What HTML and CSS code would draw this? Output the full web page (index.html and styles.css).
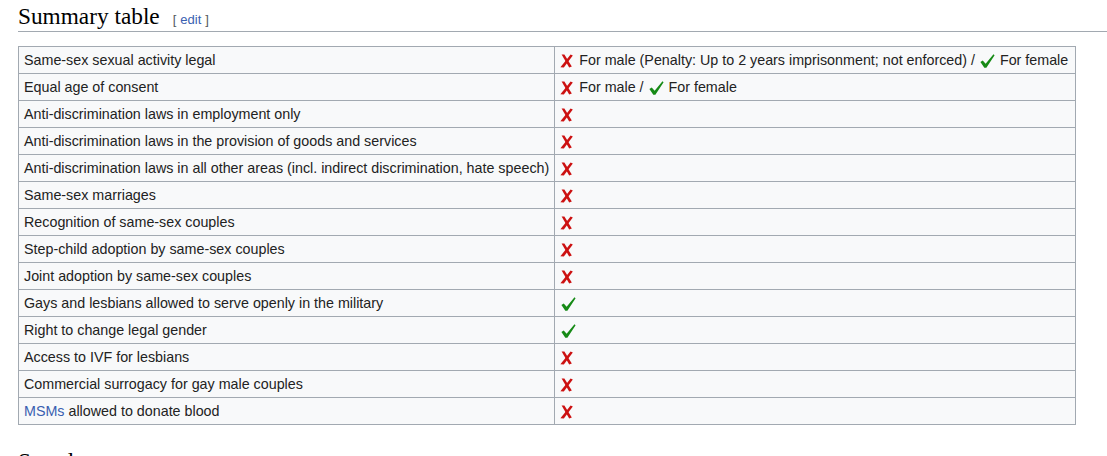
FILE: index.html
```html
<!DOCTYPE html>
<html>
<head>
<meta charset="utf-8">
<link rel="stylesheet" href="styles.css">
</head>
<body>
<div class="content">
  <h2 class="section-heading"><span class="headline">Summary table</span><span class="editsection"><span class="bracket">[</span><a class="edit-link">edit</a><span class="bracket">]</span></span></h2>
  <table class="wikitable">
    <tr><td class="label">Same-sex sexual activity legal</td><td class="value"><svg class="no" viewBox="0 0 13 14"><polygon points="1.6,0.6 4.4,0.4 11.8,12.6 9.2,13.6"/><polygon points="10.6,0.4 12.8,1.4 3.8,13.6 0.4,13.2"/></svg> For male (Penalty: Up to 2 years imprisonment; not enforced) / <svg class="yes" viewBox="0 0 16 15"><polygon points="0.4,8.6 2.9,7 6,10.4 14.4,0.4 15.6,1.4 6.8,14.6 4.6,14.6"/></svg> For female</td></tr>
    <tr><td class="label">Equal age of consent</td><td class="value"><svg class="no" viewBox="0 0 13 14"><polygon points="1.6,0.6 4.4,0.4 11.8,12.6 9.2,13.6"/><polygon points="10.6,0.4 12.8,1.4 3.8,13.6 0.4,13.2"/></svg> For male / <svg class="yes" viewBox="0 0 16 15"><polygon points="0.4,8.6 2.9,7 6,10.4 14.4,0.4 15.6,1.4 6.8,14.6 4.6,14.6"/></svg> For female</td></tr>
    <tr><td class="label">Anti-discrimination laws in employment only</td><td class="value"><svg class="no" viewBox="0 0 13 14"><polygon points="1.6,0.6 4.4,0.4 11.8,12.6 9.2,13.6"/><polygon points="10.6,0.4 12.8,1.4 3.8,13.6 0.4,13.2"/></svg></td></tr>
    <tr><td class="label">Anti-discrimination laws in the provision of goods and services</td><td class="value"><svg class="no" viewBox="0 0 13 14"><polygon points="1.6,0.6 4.4,0.4 11.8,12.6 9.2,13.6"/><polygon points="10.6,0.4 12.8,1.4 3.8,13.6 0.4,13.2"/></svg></td></tr>
    <tr><td class="label">Anti-discrimination laws in all other areas (incl. indirect discrimination, hate speech)</td><td class="value"><svg class="no" viewBox="0 0 13 14"><polygon points="1.6,0.6 4.4,0.4 11.8,12.6 9.2,13.6"/><polygon points="10.6,0.4 12.8,1.4 3.8,13.6 0.4,13.2"/></svg></td></tr>
    <tr><td class="label">Same-sex marriages</td><td class="value"><svg class="no" viewBox="0 0 13 14"><polygon points="1.6,0.6 4.4,0.4 11.8,12.6 9.2,13.6"/><polygon points="10.6,0.4 12.8,1.4 3.8,13.6 0.4,13.2"/></svg></td></tr>
    <tr><td class="label">Recognition of same-sex couples</td><td class="value"><svg class="no" viewBox="0 0 13 14"><polygon points="1.6,0.6 4.4,0.4 11.8,12.6 9.2,13.6"/><polygon points="10.6,0.4 12.8,1.4 3.8,13.6 0.4,13.2"/></svg></td></tr>
    <tr><td class="label">Step-child adoption by same-sex couples</td><td class="value"><svg class="no" viewBox="0 0 13 14"><polygon points="1.6,0.6 4.4,0.4 11.8,12.6 9.2,13.6"/><polygon points="10.6,0.4 12.8,1.4 3.8,13.6 0.4,13.2"/></svg></td></tr>
    <tr><td class="label">Joint adoption by same-sex couples</td><td class="value"><svg class="no" viewBox="0 0 13 14"><polygon points="1.6,0.6 4.4,0.4 11.8,12.6 9.2,13.6"/><polygon points="10.6,0.4 12.8,1.4 3.8,13.6 0.4,13.2"/></svg></td></tr>
    <tr><td class="label">Gays and lesbians allowed to serve openly in the military</td><td class="value"><svg class="yes" viewBox="0 0 16 15"><polygon points="0.4,8.6 2.9,7 6,10.4 14.4,0.4 15.6,1.4 6.8,14.6 4.6,14.6"/></svg></td></tr>
    <tr><td class="label">Right to change legal gender</td><td class="value"><svg class="yes" viewBox="0 0 16 15"><polygon points="0.4,8.6 2.9,7 6,10.4 14.4,0.4 15.6,1.4 6.8,14.6 4.6,14.6"/></svg></td></tr>
    <tr><td class="label">Access to IVF for lesbians</td><td class="value"><svg class="no" viewBox="0 0 13 14"><polygon points="1.6,0.6 4.4,0.4 11.8,12.6 9.2,13.6"/><polygon points="10.6,0.4 12.8,1.4 3.8,13.6 0.4,13.2"/></svg></td></tr>
    <tr><td class="label">Commercial surrogacy for gay male couples</td><td class="value"><svg class="no" viewBox="0 0 13 14"><polygon points="1.6,0.6 4.4,0.4 11.8,12.6 9.2,13.6"/><polygon points="10.6,0.4 12.8,1.4 3.8,13.6 0.4,13.2"/></svg></td></tr>
    <tr><td class="label"><a class="link">MSMs</a> allowed to donate blood</td><td class="value"><svg class="no" viewBox="0 0 13 14"><polygon points="1.6,0.6 4.4,0.4 11.8,12.6 9.2,13.6"/><polygon points="10.6,0.4 12.8,1.4 3.8,13.6 0.4,13.2"/></svg></td></tr>
  </table>
  <h2 class="section-heading next"><span class="headline">See also</span></h2>
</div>
</body>
</html>
```

FILE: styles.css
```css
html, body {
  margin: 0;
  padding: 0;
  background: #ffffff;
}
.content {
  padding: 0 0 0 18px;
  font-family: "Liberation Sans", Arial, sans-serif;
  color: #222222;
}
.section-heading {
  display: block;
  margin: 0;
  padding: 3px 0 2px 0;
  border-bottom: 1px solid #a2a9b1;
  font-family: "Liberation Serif", "Times New Roman", serif;
  font-weight: normal;
  font-size: 23.3px;
  line-height: 26px;
  color: #000000;
}
.editsection {
  font-family: "Liberation Sans", Arial, sans-serif;
  font-size: 13px;
  line-height: 14px;
  margin-left: 13px;
  color: #54595d;
}
.bracket {
  color: #54595d;
}
.edit-link {
  color: #3a5fb0;
  margin: 0 4px;
}
.wikitable {
  margin-top: 14px;
  border-collapse: collapse;
  background: #f8f9fa;
  border: 1px solid #a2a9b1;
  font-size: 14.3px;
  color: #222222;
}
.wikitable td {
  border: 1px solid #a2a9b1;
  padding: 3px 5px;
  line-height: 20px;
  height: 20px;
  white-space: nowrap;
}
.label {
  width: 525px;
}
.value {
  width: 510px;
}
.link {
  color: #3a5fb0;
}
svg.no, svg.yes {
  display: inline-block;
  vertical-align: -3px;
}
svg.no {
  width: 13px;
  height: 14px;
  fill: #cc1111;
  margin-right: 2px;
}
svg.yes {
  width: 15px;
  height: 14px;
  fill: #168a16;
  margin-left: 1px;
  margin-right: 1px;
}
.next {
  margin-top: 20px;
  border-bottom: none;
}
```
